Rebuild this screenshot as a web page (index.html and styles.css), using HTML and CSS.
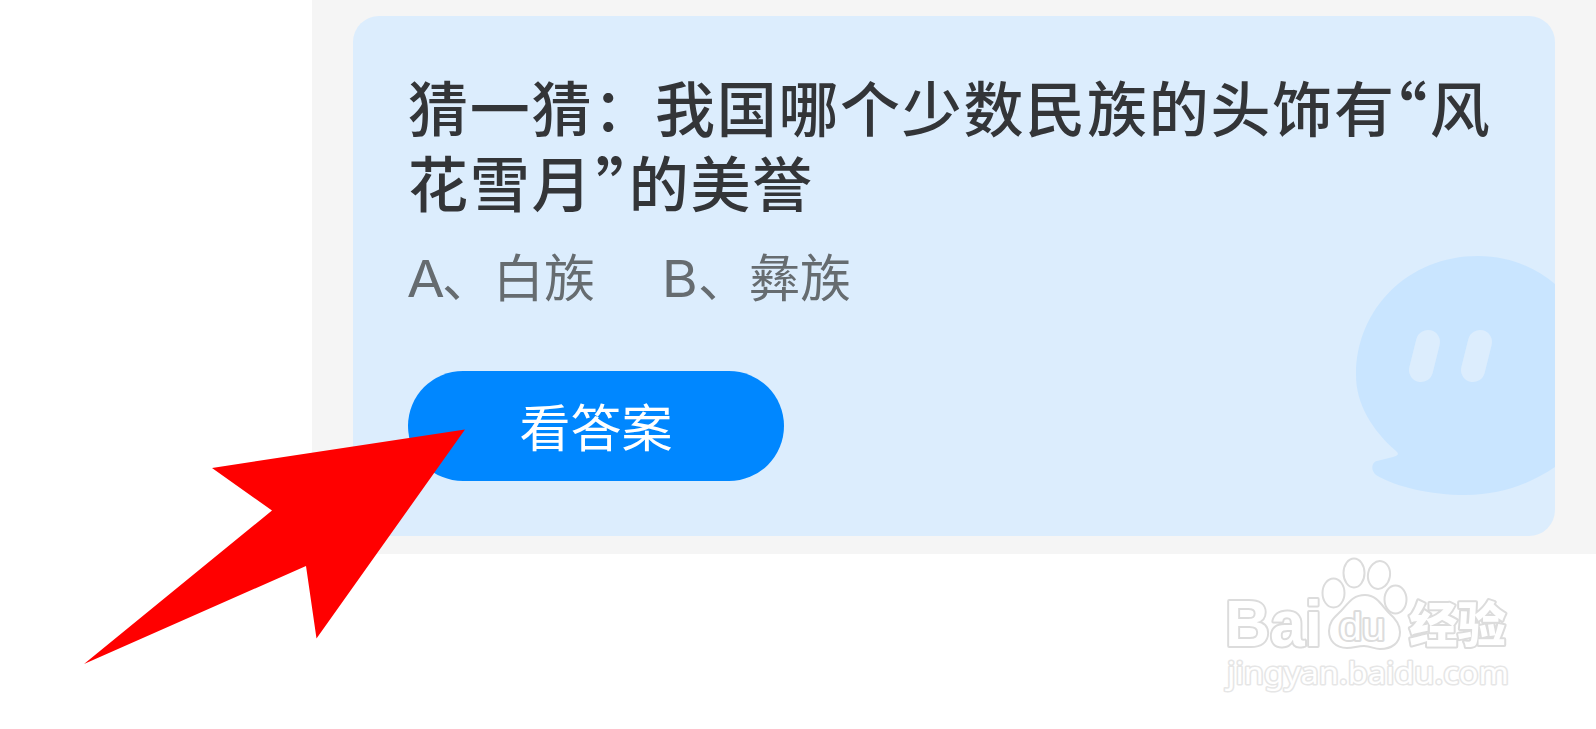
FILE: index.html
```html
<!DOCTYPE html>
<html lang="zh-CN">
<head>
<meta charset="utf-8">
<title>猜一猜</title>
<link rel="stylesheet" href="styles.css">
</head>
<body>
<main class="panel">
  <section class="card">
    <svg class="mascot" viewBox="1355 250 200 250" aria-hidden="true">
      <path class="mascot-body" d="M1478 256C1510 256 1536 268 1555 284V467C1530 484 1500 495 1466 495C1430 495 1396 487 1376 475C1370 470 1372 462 1377 461L1393 457Q1401 455 1396 451C1372 430 1356 404 1356 375C1356 309 1408 256 1478 256Z"/>
      <path class="mascot-eye" d="M1428 342L1421 370M1480 342L1473 370"/>
    </svg>
    <h1 class="question"><span class="line">猜一猜：我国哪个少数民族的头饰有<span class="quote open">“</span>风</span><span class="line">花雪月<span class="quote close">”</span>的美誉</span></h1>
    <div class="options"><span class="option"><span class="letter">A</span>、白族</span><span class="option"><span class="letter">B</span>、彝族</span></div>
    <button class="answer">看答案</button>
  </section>
</main>
<svg class="watermark" viewBox="1215 550 310 150">
  <g class="logo">
    <ellipse cx="1333.500" cy="593" rx="11" ry="14.500"/>
    <ellipse cx="1354" cy="573" rx="10.500" ry="14.500"/>
    <ellipse cx="1379" cy="575" rx="11" ry="14" transform="rotate(10 1379 575)"/>
    <ellipse cx="1395.500" cy="599.500" rx="11" ry="14"/>
    <text class="brand" x="1225" y="646" textLength="97" lengthAdjust="spacingAndGlyphs">Bai</text>
    <path d="M1365 595C1377 595 1382 606 1389 613C1396 619 1400 625 1400 632C1400 643 1392 649 1380 649C1374 649 1371 646 1364 646C1357 646 1354 648 1347 648C1335 648 1329 640 1329 631C1329 621 1335 617 1341 611C1348 604 1352 595 1365 595Z"/>
    <text class="du" x="1339" y="640" textLength="46" lengthAdjust="spacingAndGlyphs">du</text>
    <text class="brand-cn" x="1409" y="642" textLength="97" lengthAdjust="spacingAndGlyphs">经验</text>
  </g>
  <text class="site" x="1227" y="684" textLength="282" lengthAdjust="spacingAndGlyphs">jingyan.baidu.com</text>
</svg>
<svg class="arrow" viewBox="80 425 390 245" aria-hidden="true">
  <path d="M465 429.500L212 468L272 510.500L84 664L306 566L316.500 638.500Z"/>
</svg>
</body>
</html>
```
FILE: styles.css
```css
* { box-sizing: border-box; }
body {
  margin: 0;
  height: 729px;
  overflow: hidden;
  position: relative;
  background: #fff;
  font-family: "Noto Sans CJK SC", sans-serif;
}
.panel {
  height: 554px;
  margin-left: 312px;
  padding: 16px 41px 18px;
  background: #f5f5f5;
}
.card {
  position: relative;
  height: 520px;
  padding: 52px 55px 0;
  border-radius: 26px;
  overflow: hidden;
  background: #dcedfd;
}
.mascot {
  position: absolute;
  right: 0;
  top: 234px;
  width: 200px;
  height: 250px;
}
.mascot-body { fill: #c9e5ff; }
.mascot-eye { fill: none; stroke: #dcedfd; stroke-width: 24; stroke-linecap: round; }
.question {
  position: relative;
  margin: 0;
  font-size: 60px;
  font-weight: 500;
  line-height: 75px;
  letter-spacing: 1.73px;
  color: #333538;
}
.line { display: block; height: 75px; white-space: nowrap; }
.quote {
  display: inline-flex;
  justify-content: center;
  font-size: 68px;
  line-height: 60px;
  letter-spacing: 0;
  font-feature-settings: "palt";
  vertical-align: -7px;
}
.open { width: 34px; padding-right: 6px; }
.close { width: 35.500px; padding-left: 5px; }
.options {
  display: flex;
  gap: 68px;
  margin-top: 19px;
  font-size: 51px;
  line-height: 76px;
  color: #666c70;
}
.option { display: block; height: 76px; white-space: nowrap; }
.letter {
  display: inline-block;
  width: 35px;
  margin-left: -1px;
  font-family: Inter, sans-serif;
  font-size: 51px;
  transform: scaleX(1.08);
  transform-origin: 4px 50%;
}
.option + .option .letter { width: 36px; }
.answer {
  display: block;
  width: 376px;
  height: 110px;
  margin-top: 58px;
  padding: 0 0 2px;
  border: 0;
  border-radius: 55px;
  background: #0087ff;
  color: #fff;
  font: 51px/108px "Noto Sans CJK SC", sans-serif;
}
.watermark {
  position: absolute;
  left: 1215px;
  top: 550px;
  width: 310px;
  height: 150px;
  fill: #fff;
  stroke: #dcdcdc;
  stroke-width: 2;
}
.watermark text { paint-order: stroke; stroke-width: 4; stroke-linejoin: round; }
.brand { font: bold 64px "Liberation Sans", sans-serif; }
.du { font: 38px "Liberation Sans", sans-serif; }
.brand-cn { font: 900 48px "Noto Sans CJK SC", sans-serif; }
.watermark .site { font: 30px "Noto Sans", sans-serif; stroke: #e6e6e6; stroke-width: 3; }
.arrow {
  position: absolute;
  left: 80px;
  top: 425px;
  width: 390px;
  height: 245px;
  fill: #f00;
}
```
